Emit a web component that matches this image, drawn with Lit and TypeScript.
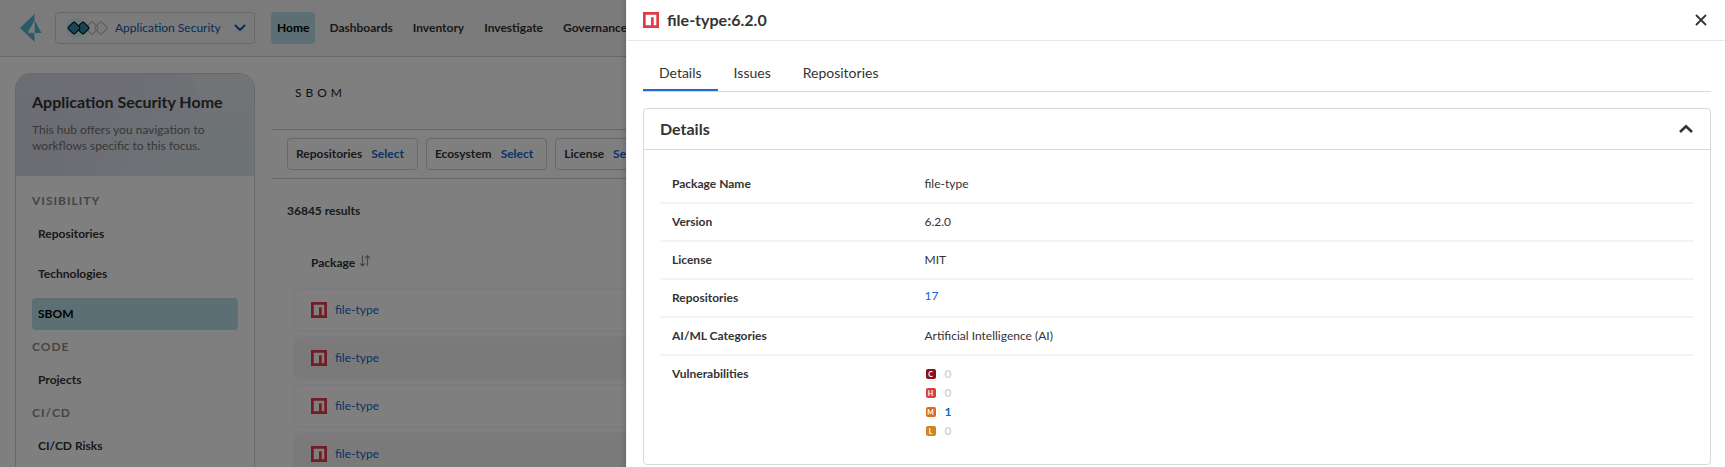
import { LitElement, html, css, svg } from "lit";
import { customElement, property, state } from "lit/decorators.js";

const npmIcon = html`<svg class="npm" viewBox="0 0 16 16" width="16" height="16" aria-hidden="true">
  <path fill="#e63946" d="M0 0h16v16H0z" />
  <path fill="#fff" d="M2.7 2.7h10.6v10.6h-2.6V5.3H8v8H2.7z" />
</svg>`;

const shared = css`
  *,
  *::before,
  *::after {
    box-sizing: border-box;
  }
  button,
  select {
    font: inherit;
    color: inherit;
    background: none;
    border: 0;
    margin: 0;
    padding: 0;
    cursor: pointer;
  }
  a {
    color: #1268c8;
    text-decoration: none;
  }
  h1,
  h2,
  h3,
  p,
  ul,
  dl,
  dd {
    margin: 0;
    padding: 0;
  }
  ul {
    list-style: none;
  }
  svg {
    display: block;
    flex: none;
  }
`;

@customElement("top-bar")
export class TopBar extends LitElement {
  static styles = [
    shared,
    css`
      :host {
        display: block;
      }
      .bar {
        display: flex;
        align-items: center;
        height: 57px;
        padding: 0 16px 0 20px;
        background: #f7f7f7;
        border-bottom: 1px solid #d0d0d0;
      }
      .product {
        display: flex;
        align-items: center;
        gap: 7px;
        width: 200px;
        height: 32px;
        margin: 0 16px 0 13px;
        padding: 0 8px 0 10px;
        border: 1px solid #d0d0d0;
        border-radius: 4px;
        color: #1058b0;
      }
      .product select {
        flex: 1;
        min-width: 0;
        appearance: none;
        font-size: 12px;
        line-height: 16px;
      }
      nav {
        display: flex;
        gap: 8px;
      }
      nav a {
        padding: 0 6px;
        border-radius: 4px;
        font-weight: 700;
        line-height: 32px;
        color: #333;
        white-space: nowrap;
      }
      nav a.current {
        background: #b6dfe8;
        color: #000;
      }
    `,
  ];

  private links = ["Home", "Dashboards", "Inventory", "Investigate", "Governance"];

  render() {
    return html`<header class="bar">
      <svg width="22" height="28" viewBox="0 0 22 28" aria-hidden="true">
        <path fill="#52b9cf" d="M14.500 0v18.500H8L14.500 28 0 14z" />
        <path fill="#f7f7f7" d="M14.300 7v11.500H7.800z" />
        <path fill="#52b9cf" d="M15 7l6.500 12H15zM8 19.300h6.500V28z" />
      </svg>
      <div class="product">
        <svg width="42" height="26" viewBox="0 0 42 26" aria-hidden="true">
          <defs>
            <radialGradient id="glow">
              <stop offset="0" stop-color="#6fd0e4" stop-opacity=".6" />
              <stop offset="1" stop-color="#6fd0e4" stop-opacity="0" />
            </radialGradient>
          </defs>
          <circle cx="10" cy="13" r="13" fill="url(#glow)" />
          ${[26, 35].map(
            (x) => svg`<rect x=${x - 4.7} y="8.300" width="9.400" height="9.400" rx="1.500"
              transform=${`rotate(45 ${x} 13)`} fill="none" stroke="#b4b4c4" stroke-width="1" />`
          )}
          ${[17, 8].map(
            (x) => svg`<rect x=${x - 4.6} y="8.400" width="9.200" height="9.200" rx="1.500"
              transform=${`rotate(45 ${x} 13)`} fill="#2790a8" stroke="#111" stroke-width="1.200" />`
          )}
        </svg>
        <select aria-label="Product">
          <option>Application Security</option>
        </select>
        <svg width="12" height="8" viewBox="0 0 12 8" aria-hidden="true">
          <path d="M1.500 1.500L6 6l4.500-4.500" fill="none" stroke="#1058b0" stroke-width="2" stroke-linecap="round" stroke-linejoin="round" />
        </svg>
      </div>
      <nav aria-label="Main">
        ${this.links.map((l, i) => html`<a href="#" class=${i === 0 ? "current" : ""}>${l}</a>`)}
      </nav>
    </header>`;
  }
}

@customElement("side-menu")
export class SideMenu extends LitElement {
  static styles = [
    shared,
    css`
      :host {
        display: block;
      }
      .card {
        height: 100%;
        border: 1px solid #d0d0d0;
        border-bottom: 0;
        border-radius: 16px 16px 0 0;
        overflow: hidden;
      }
      .hero {
        display: grid;
        align-content: start;
        gap: 8px;
        height: 102px;
        padding: 16px;
        background: radial-gradient(circle at 85% 120%, #dde6ed 0 25%, #dde6ed00 70%),
          radial-gradient(circle at 0 80%, #d8d8e6 0, #dcdce6 192px, #e9ebec 193px);
      }
      h2 {
        font-size: 16px;
        line-height: 24px;
        color: #333;
      }
      p {
        color: #707070;
        line-height: 16px;
      }
      nav {
        padding: 8px 16px;
      }
      h3 {
        font-size: 12px;
        line-height: 34px;
        letter-spacing: 1px;
        color: #8a8a8a;
      }
      ul {
        display: grid;
        gap: 8px;
      }
      li a {
        display: block;
        padding: 0 6px;
        border-radius: 4px;
        font-weight: 700;
        line-height: 32px;
        color: #333;
      }
      li a.current {
        background: #b6dfe8;
        color: #000;
      }
    `,
  ];

  private groups: [string, string[]][] = [
    ["VISIBILITY", ["Repositories", "Technologies", "SBOM"]],
    ["CODE", ["Projects"]],
    ["CI/CD", ["CI/CD Risks"]],
  ];

  render() {
    return html`<aside class="card">
      <div class="hero">
        <h2>Application Security Home</h2>
        <p>This hub offers you navigation to workflows specific to this focus.</p>
      </div>
      <nav aria-label="Application Security">
        ${this.groups.map(
          ([title, items]) => html`<h3>${title}</h3>
            <ul>
              ${items.map((t) => html`<li><a href="#" class=${t === "SBOM" ? "current" : ""}>${t}</a></li>`)}
            </ul>`
        )}
      </nav>
    </aside>`;
  }
}

@customElement("sbom-list")
export class SbomList extends LitElement {
  static styles = [
    shared,
    css`
      :host {
        display: block;
        min-width: 0;
      }
      h1 {
        padding: 0 24px;
        font-size: 12px;
        font-weight: 400;
        line-height: 72px;
        letter-spacing: 4px;
        color: #222;
      }
      .filters {
        display: flex;
        gap: 8px;
        padding: 8px 16px;
        border: solid #d0d0d0;
        border-width: 1px 0;
      }
      .filters button {
        display: flex;
        align-items: center;
        gap: 9px;
        height: 32px;
        padding: 0 13px 0 8px;
        border: 1px solid #d0d0d0;
        border-radius: 4px;
        font-weight: 700;
      }
      .filters span {
        color: #1268c8;
      }
      .count {
        padding: 24px 16px 16px;
        font-weight: 700;
        line-height: 16px;
      }
      .holder {
        padding: 0 24px;
      }
      table {
        width: 100%;
        border-collapse: separate;
        border-spacing: 0 8px;
      }
      th {
        height: 39px;
        padding: 0 16px;
        text-align: left;
      }
      th button {
        display: flex;
        align-items: flex-start;
        gap: 4px;
        font-weight: 700;
      }
      td {
        height: 40px;
        padding: 0 16px;
        border-radius: 4px;
        background: #fff;
        box-shadow: 0 0 4px #00000018;
      }
      tbody tr:nth-child(even) td {
        background: #f4f4f4;
      }
      td a {
        display: flex;
        align-items: center;
        gap: 8px;
      }
    `,
  ];

  render() {
    return html`<main>
      <h1>SBOM</h1>
      <div class="filters">
        ${["Repositories", "Ecosystem", "License"].map(
          (f) => html`<button type="button">${f} <span>Select</span></button>`
        )}
      </div>
      <p class="count">36845 results</p>
      <div class="holder">
        <table>
          <thead>
            <tr>
              <th scope="col">
                <button type="button">
                  Package
                  <svg width="12" height="12" viewBox="0 0 12 12" aria-hidden="true">
                    <path d="M3.500 .5v10M1 8.300L3.500 10.800 6 8.300M8.500 11V1M6 3.200L8.500 .7 11 3.200" fill="none" stroke="#8c8c8c" stroke-width="1.200" />
                  </svg>
                </button>
              </th>
            </tr>
          </thead>
          <tbody>
            ${[1, 2, 3, 4].map(() => html`<tr><td><a href="#">${npmIcon} file-type</a></td></tr>`)}
          </tbody>
        </table>
      </div>
    </main>`;
  }
}

interface Severity {
  letter: string;
  name: string;
  count: number;
}

@customElement("package-drawer")
export class PackageDrawer extends LitElement {
  @property() name = "file-type";
  @property() version = "6.2.0";
  @state() private tab = "Details";
  @state() private open = true;

  private severities: Severity[] = [
    { letter: "C", name: "critical", count: 0 },
    { letter: "H", name: "high", count: 0 },
    { letter: "M", name: "medium", count: 1 },
    { letter: "L", name: "low", count: 0 },
  ];

  static styles = [
    shared,
    css`
      :host {
        display: block;
      }
      header {
        display: flex;
        align-items: center;
        gap: 8px;
        height: 41px;
        padding: 0 16px;
        border-bottom: 1px solid #e8e8e8;
      }
      h1,
      h2 {
        flex: 1;
        font-size: 16px;
        line-height: 24px;
      }
      .icon-button {
        display: grid;
        place-items: center;
        width: 16px;
        height: 16px;
      }
      .body {
        display: grid;
        gap: 16px;
        padding: 16px 14px 16px 16px;
      }
      .tabs {
        display: flex;
        border-bottom: 1px solid #d8d8d8;
      }
      .tabs button {
        padding: 0 16px;
        border-bottom: 2px solid transparent;
        font-size: 14px;
        line-height: 32px;
      }
      .tabs button.active {
        border-color: #1f6bd0;
      }
      .card {
        border: 1px solid #d8d8d8;
        border-radius: 4px;
      }
      .card-head {
        display: flex;
        align-items: center;
        height: 41px;
        padding: 0 16px;
        border-bottom: 1px solid #d8d8d8;
      }
      dl {
        padding: 16px;
      }
      .row {
        display: grid;
        grid-template-columns: 1fr 3fr;
        padding: 8px 12px;
        border-bottom: 2px solid #f4f4f4;
        line-height: 20px;
      }
      .row:last-child {
        border-bottom: 0;
      }
      dt {
        font-weight: 700;
      }
      .raised {
        line-height: 16px;
      }
      .levels li {
        display: flex;
        align-items: center;
        gap: 9px;
        height: 19px;
        padding-left: 1px;
      }
      .badge {
        width: 10px;
        height: 10px;
        border-radius: 2px;
        font-size: 7px;
        font-weight: 700;
        line-height: 10px;
        text-align: center;
        color: #fff;
      }
      .critical {
        background: #8c1018;
      }
      .high {
        background: #d43f43;
      }
      .medium {
        background: #dc6a1c;
      }
      .low {
        background: #cf8522;
      }
      .none {
        color: #d0d3da;
        font-weight: 700;
      }
      .levels a {
        font-weight: 700;
      }
    `,
  ];

  render() {
    return html`
      <header>
        ${npmIcon}
        <h1>${this.name}:${this.version}</h1>
        <button class="icon-button" type="button" aria-label="Close">
          <svg width="12" height="12" viewBox="0 0 12 12" aria-hidden="true">
            <path d="M1.500 1.500l9 9M10.500 1.500l-9 9" stroke="#333" stroke-width="1.800" stroke-linecap="round" />
          </svg>
        </button>
      </header>
      <div class="body">
        <div class="tabs" role="tablist">
          ${["Details", "Issues", "Repositories"].map(
            (t) => html`<button
              type="button"
              role="tab"
              aria-selected=${this.tab === t}
              class=${this.tab === t ? "active" : ""}
              @click=${() => (this.tab = t)}
            >
              ${t}
            </button>`
          )}
        </div>
        <section class="card">
          <div class="card-head">
            <h2>Details</h2>
            <button
              class="icon-button"
              type="button"
              aria-label="Toggle details"
              aria-expanded=${this.open}
              @click=${() => (this.open = !this.open)}
            >
              <svg width="16" height="10" viewBox="0 0 16 10" aria-hidden="true">
                <path d="M2 8l6-5.600L14 8" fill="none" stroke="#333" stroke-width="2.600" />
              </svg>
            </button>
          </div>
          ${this.open ? this.details() : null}
        </section>
      </div>
    `;
  }

  private details() {
    return html`<dl>
      <div class="row"><dt>Package Name</dt><dd>${this.name}</dd></div>
      <div class="row"><dt>Version</dt><dd>${this.version}</dd></div>
      <div class="row"><dt>License</dt><dd>MIT</dd></div>
      <div class="row"><dt>Repositories</dt><dd class="raised"><a href="#">17</a></dd></div>
      <div class="row"><dt>AI/ML Categories</dt><dd>Artificial Intelligence (AI)</dd></div>
      <div class="row">
        <dt>Vulnerabilities</dt>
        <dd>
          <ul class="levels">
            ${this.severities.map(
              (s) => html`<li>
                <span class="badge ${s.name}">${s.letter}</span>
                ${s.count ? html`<a href="#">${s.count}</a>` : html`<span class="none">0</span>`}
              </li>`
            )}
          </ul>
        </dd>
      </div>
    </dl>`;
  }
}

@customElement("app-root")
export class AppRoot extends LitElement {
  static styles = [
    shared,
    css`
      :host {
        display: block;
        position: relative;
        height: 100vh;
        overflow: hidden;
        background: #fff;
        color: #333;
        font: 12px/16px Lato, sans-serif;
      }
      .page {
        display: flex;
        flex-direction: column;
        height: 100%;
      }
      .columns {
        flex: 1;
        display: grid;
        grid-template-columns: 240px 1fr;
        gap: 16px;
        min-height: 0;
        padding-left: 15px;
      }
      side-menu {
        padding-top: 16px;
      }
      .scrim {
        position: absolute;
        inset: 0;
        background: #00000080;
      }
      package-drawer {
        position: absolute;
        inset: 0 0 0 auto;
        width: 1099px;
        max-width: 100%;
        background: #fff;
        border-left: 1px solid #f4f4f4;
        box-shadow: 0 0 6px #00000040;
      }
    `,
  ];

  render() {
    return html`
      <div class="page">
        <top-bar></top-bar>
        <div class="columns">
          <side-menu></side-menu>
          <sbom-list></sbom-list>
        </div>
      </div>
      <div class="scrim"></div>
      <package-drawer role="dialog" aria-label="Package details"></package-drawer>
    `;
  }
}
